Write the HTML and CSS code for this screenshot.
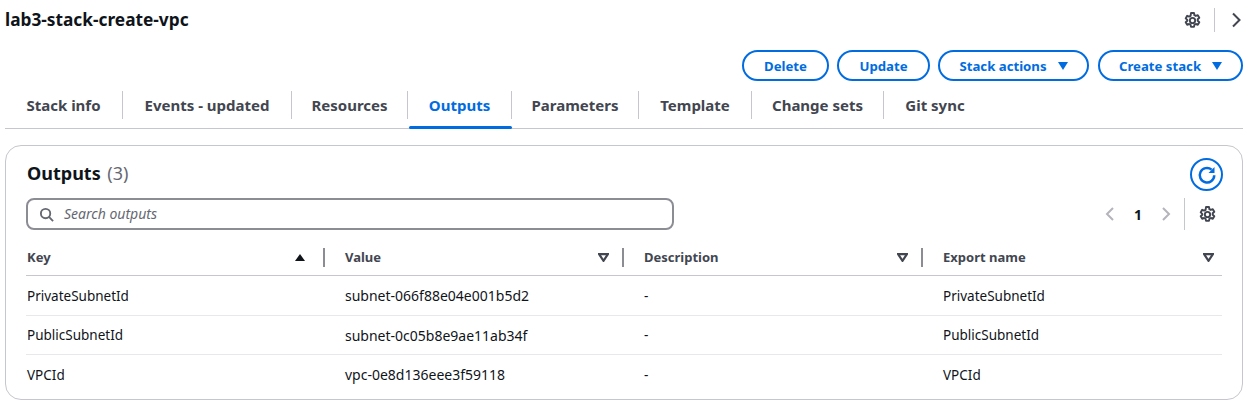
FILE: index.html
```html
<!DOCTYPE html>
<html lang="en">
<head>
  <meta charset="UTF-8">
  <meta name="viewport" content="width=device-width, initial-scale=1.0">
  <title>lab3-stack-create-vpc</title>
  <link rel="stylesheet" href="styles.css">
</head>
<body>
  <!--TITLE ROW-->
  <div class="top-row">
    <h1 class="stack-name">lab3-stack-create-vpc</h1>
    <div class="top-icons">
      <svg class="icon" viewBox="0 0 16 16"><use href="#gear"></use></svg>
      <span class="top-sep"></span>
      <svg class="chevron" viewBox="0 0 16 16"><path d="M6 1.500l6.500 6.500-6.500 6.500"></path></svg>
    </div>
  </div>

  <!--ACTION BUTTONS-->
  <div class="actions">
    <button class="btn btn-delete">Delete</button>
    <button class="btn btn-update">Update</button>
    <button class="btn btn-stack">Stack actions <span class="caret"></span></button>
    <button class="btn btn-create">Create stack <span class="caret"></span></button>
  </div>

  <!--TABS-->
  <div class="tabs">
    <a class="tab tab-info">Stack info</a>
    <a class="tab tab-events">Events - updated</a>
    <a class="tab tab-resources">Resources</a>
    <a class="tab tab-outputs active">Outputs</a>
    <a class="tab tab-parameters">Parameters</a>
    <a class="tab tab-template">Template</a>
    <a class="tab tab-changes">Change sets</a>
    <a class="tab tab-git last">Git sync</a>
  </div>

  <!--OUTPUTS CARD-->
  <div class="card">
    <div class="card-head">
      <h2 class="card-title">Outputs <span class="count">(3)</span></h2>
      <button class="refresh">
        <svg viewBox="0 0 16 16"><path d="M13.800 8.200a5.800 5.800 0 1 1-2.100-4.500"></path><path class="fill" d="M14 1.500v4.800H9.200z"></path></svg>
      </button>
    </div>

    <div class="tools">
      <div class="search">
        <svg class="search-icon" viewBox="0 0 16 16"><circle cx="7" cy="7" r="5"></circle><path d="M10.600 10.600L15 15"></path></svg>
        <span class="placeholder">Search outputs</span>
      </div>
      <div class="pager">
        <svg class="page-arrow" viewBox="0 0 16 16"><path d="M11 2L5 8l6 6"></path></svg>
        <span class="page-num">1</span>
        <svg class="page-arrow" viewBox="0 0 16 16"><path d="M5 2l6 6-6 6"></path></svg>
        <span class="pager-sep"></span>
        <svg class="icon" viewBox="0 0 16 16"><use href="#gear"></use></svg>
      </div>
    </div>

    <div class="table">
      <div class="row head">
        <div class="cell"><span>Key</span><span class="sort-up"></span><span class="col-sep"></span></div>
        <div class="cell"><span>Value</span><svg class="sort" viewBox="0 0 10 8"><path d="M1 1h8L5 7z"></path></svg><span class="col-sep"></span></div>
        <div class="cell"><span>Description</span><svg class="sort" viewBox="0 0 10 8"><path d="M1 1h8L5 7z"></path></svg><span class="col-sep"></span></div>
        <div class="cell"><span>Export name</span><svg class="sort" viewBox="0 0 10 8"><path d="M1 1h8L5 7z"></path></svg></div>
      </div>
      <div class="row">
        <div class="cell">PrivateSubnetId</div>
        <div class="cell value">subnet-066f88e04e001b5d2</div>
        <div class="cell">-</div>
        <div class="cell">PrivateSubnetId</div>
      </div>
      <div class="row">
        <div class="cell">PublicSubnetId</div>
        <div class="cell value">subnet-0c05b8e9ae11ab34f</div>
        <div class="cell">-</div>
        <div class="cell">PublicSubnetId</div>
      </div>
      <div class="row">
        <div class="cell">VPCId</div>
        <div class="cell value">vpc-0e8d136eee3f59118</div>
        <div class="cell">-</div>
        <div class="cell">VPCId</div>
      </div>
    </div>
  </div>

  <svg class="defs" width="0" height="0">
    <symbol id="gear" viewBox="0 0 16 16">
      <circle cx="8" cy="8" r="2.500"></circle>
      <path d="M6.600 1h2.800l.4 2 1.300.7 1.900-.7 1.400 2.400-1.500 1.400v1.400l1.500 1.400-1.400 2.400-1.900-.7-1.300.7-.4 2H6.600l-.4-2-1.300-.7-1.900.7-1.400-2.400 1.500-1.400V7.400L1.600 6l1.400-2.400 1.900.7 1.300-.7z"></path>
    </symbol>
  </svg>
</body>
</html>
```

FILE: styles.css
```css
* {
  margin: 0;
  padding: 0;
  box-sizing: border-box;
}

body {
  font-family: "Noto Sans", "Open Sans", sans-serif;
  font-size: 14px;
  color: #0f141a;
  background-color: #fff;
  padding: 0 6px 0 5px;
  height: 411px;
  overflow: hidden;
}

.defs {
  position: absolute;
}

.top-row {
  display: flex;
  justify-content: space-between;
  align-items: center;
  height: 40px;
}

.stack-name {
  font-size: 17.300px;
  font-weight: 700;
  line-height: 40px;
}

.top-icons {
  display: flex;
  align-items: center;
  color: #424650;
}

.icon {
  width: 17px;
  height: 17px;
  fill: none;
  stroke: #424650;
  stroke-width: 1.800;
  stroke-linejoin: round;
}

.top-sep {
  width: 1px;
  height: 24px;
  margin: 0 12px 0 13px;
  background-color: #c6c6cd;
}

.chevron {
  width: 16px;
  height: 16px;
  fill: none;
  stroke: #424650;
  stroke-width: 2;
}

.actions {
  display: flex;
  justify-content: flex-end;
  gap: 8px;
  margin-top: 10px;
}

.btn {
  font-family: inherit;
  font-size: 13.200px;
  font-weight: 700;
  height: 31px;
  color: #006ce0;
  background-color: #fff;
  border: 2px solid #006ce0;
  border-radius: 20px;
  display: flex;
  align-items: center;
  justify-content: center;
  gap: 11px;
}

.btn-delete { width: 87px; }
.btn-update { width: 93px; }
.btn-stack { width: 151px; }
.btn-create { width: 145px; margin-left: 1px; }

.caret {
  width: 0;
  height: 0;
  border-left: 5.500px solid transparent;
  border-right: 5.500px solid transparent;
  border-top: 8px solid #006ce0;
}

.tabs {
  display: flex;
  align-items: stretch;
  height: 48px;
  border-bottom: 1px solid #c6c6cd;
  padding-top: 10px;
}

.tab {
  position: relative;
  font-weight: 700;
  font-size: 15px;
  color: #424650;
  height: 28px;
  line-height: 28px;
  text-align: center;
  border-right: 1px solid #c6c6cd;
  white-space: nowrap;
}

.tab-info { width: 118px; }
.tab-events { width: 169px; }
.tab-resources { width: 116px; }
.tab-outputs { width: 104px; }
.tab-parameters { width: 127px; }
.tab-template { width: 113px; }
.tab-changes { width: 132px; }
.tab-git { width: 102px; }

.tab.last {
  border-right: none;
}

.tab.active {
  color: #006ce0;
}

.tab.active::after {
  content: "";
  position: absolute;
  left: 1px;
  right: -1px;
  top: 35px;
  height: 3px;
  border-radius: 2px;
  background-color: #006ce0;
}

.card {
  margin-top: 16px;
  height: 255px;
  border: 1px solid #c6c6cd;
  border-radius: 16px;
  padding: 12px 20px 0 20px;
}

.card-head {
  display: flex;
  justify-content: space-between;
  align-items: center;
  height: 33px;
  margin-right: -1px;
}

.card-title {
  font-size: 18px;
  font-weight: 700;
  line-height: 28px;
  margin-left: 1px;
  margin-bottom: 3px;
}

.count {
  font-weight: 400;
  color: #656871;
  margin-left: 2px;
}

.refresh {
  width: 33px;
  height: 33px;
  border: 2px solid #006ce0;
  border-radius: 50%;
  background-color: #fff;
  display: flex;
  align-items: center;
  justify-content: center;
}

.refresh svg {
  width: 20px;
  height: 20px;
  fill: none;
  stroke: #006ce0;
  stroke-width: 2;
}

.refresh .fill {
  fill: #006ce0;
  stroke: none;
}

.tools {
  display: flex;
  justify-content: space-between;
  align-items: center;
  margin-top: 7px;
}

.search {
  width: 648px;
  height: 32px;
  border: 2px solid #8c8c94;
  border-radius: 8px;
  display: flex;
  align-items: center;
  padding-left: 11px;
  gap: 10px;
}

.search-icon {
  width: 15px;
  height: 15px;
  fill: none;
  stroke: #656871;
  stroke-width: 2;
}

.placeholder {
  font-size: 14px;
  font-style: italic;
  color: #656871;
  margin-bottom: 2px;
}

.pager {
  display: flex;
  align-items: center;
  margin-right: 6px;
}

.page-arrow {
  width: 16px;
  height: 16px;
  fill: none;
  stroke: #b4b4bb;
  stroke-width: 2;
}

.page-num {
  font-weight: 700;
  font-size: 14px;
  width: 40px;
  text-align: center;
}

.pager-sep {
  width: 1px;
  height: 32px;
  margin: 0 14px 0 10px;
  background-color: #c6c6cd;
}

.table {
  margin-top: 9px;
}

.row {
  display: grid;
  grid-template-columns: repeat(4, 299px);
  height: 39px;
  border-bottom: 1px solid #e8e8ec;
  align-items: center;
}

.row:last-child {
  border-bottom: none;
}

.row.head {
  height: 37px;
  border-bottom: 1px solid #c6c6cd;
}

.head + .row {
  height: 40px;
}

.cell {
  display: flex;
  align-items: center;
  padding-left: 1px;
  font-size: 13.500px;
  color: #0f141a;
}

.cell.value {
  font-size: 14px;
}

.head .cell {
  font-size: 13px;
  font-weight: 700;
  color: #424650;
  position: relative;
  padding-right: 16px;
}

.head .cell:last-child {
  padding-right: 9px;
}

.head .cell + .cell,
.row .cell + .cell {
  padding-left: 20px;
}

.sort-up {
  margin-left: auto;
  width: 0;
  height: 0;
  border-left: 5px solid transparent;
  border-right: 5px solid transparent;
  border-bottom: 7px solid #0f141a;
  margin-right: 4px;
}

.sort {
  margin-left: auto;
  width: 11px;
  height: 9px;
  fill: none;
  stroke: #424650;
  stroke-width: 2;
  margin-right: -1px;
}

.col-sep {
  position: absolute;
  right: 0;
  top: 0;
  width: 2px;
  height: 19px;
  background-color: #8c8c94;
}
```
